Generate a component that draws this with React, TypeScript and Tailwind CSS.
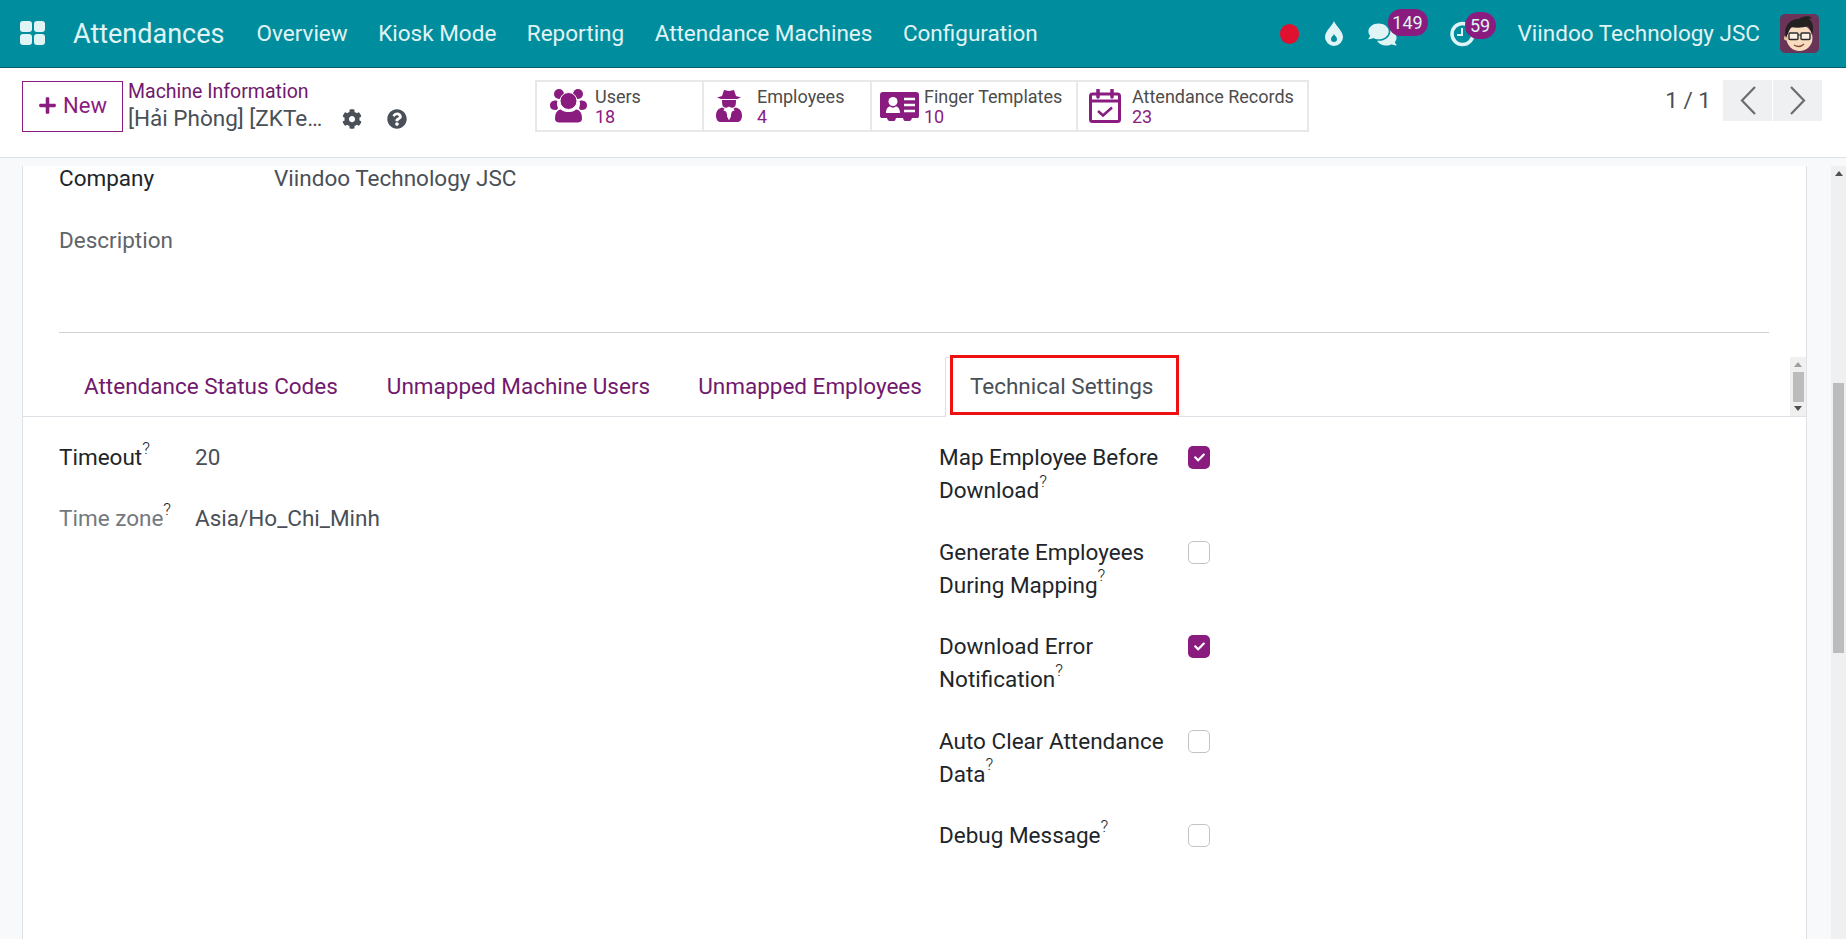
import { FaCheck, FaCog, FaComments, FaQuestionCircle, FaPlus } from 'react-icons/fa';
import type { ReactNode } from 'react';

const NAV_ITEMS = ['Overview', 'Kiosk Mode', 'Reporting', 'Attendance Machines', 'Configuration'];

function AppsIcon() {
  return (
    <div className="grid w-[25px] grid-cols-2 gap-[2px]">
      <span className="h-[11px] rounded-[3px] bg-[#e0f3f5]" />
      <span className="h-[11px] rounded-[3px] bg-[#e0f3f5]" />
      <span className="h-[11px] rounded-[3px] bg-[#e0f3f5]" />
      <span className="h-[11px] rounded-[3px] bg-[#e0f3f5]" />
    </div>
  );
}

function Avatar() {
  return (
    <svg width="39" height="39" viewBox="0 0 39 39" className="shrink-0 rounded-[5px]">
      <rect width="39" height="39" fill="#6a3458" />
      <ellipse cx="19.500" cy="24" rx="13" ry="13" fill="#f8dcc0" />
      <circle cx="6.500" cy="24" r="2.500" fill="#eec7a4" />
      <path d="M6 24C3 13 9 5 19 5c3-3 11-4 13-1-2 0-3 1-3 1 4 3 5 9 3 16-1-4-2-7-4-9-5 2-12 2-17 1-2 3-3 7-5 11z" fill="#24201f" />
      <rect x="9" y="19" width="9" height="6.500" rx="1" fill="#fff" fillOpacity=".55" stroke="#2b2b2b" strokeWidth="1.400" />
      <rect x="21" y="19" width="9" height="6.500" rx="1" fill="#fff" fillOpacity=".55" stroke="#2b2b2b" strokeWidth="1.400" />
      <path d="M18 21h3" stroke="#2b2b2b" strokeWidth="1.200" />
      <path d="M14 31c3 2 7 2 10-1" stroke="#8a4a38" strokeWidth="1.400" fill="none" />
    </svg>
  );
}

function UsersIcon() {
  return (
    <svg width="37" height="34" viewBox="0 0 37 34" className="mr-[8px] shrink-0" fill="#8a1c80">
      <circle cx="9" cy="5" r="5" />
      <circle cx="28" cy="5" r="5" />
      <path d="M6 11.500c-3 0-6 1-6 5 0 3 2 4.500 6 4.500 1 0 1.500-1 2-2-1-2-1.500-5-.5-7z" />
      <path d="M31 11.500c3 0 6 1 6 5 0 3-2 4.500-6 4.500-1 0-1.500-1-2-2 1-2 1.500-5 .5-7z" />
      <circle cx="18.500" cy="12" r="8.500" stroke="#fff" strokeWidth="1" />
      <path d="M9.500 33.500c-2 0-4.500-1-4.500-3.500 0-6 2-9 6-9.500 2 2 4.500 2.500 7.500 2.500s5.500-.5 7.500-2.500c4 .5 6 3.500 6 9.500 0 2.500-2.500 3.500-4.500 3.500z" />
    </svg>
  );
}

function SpyIcon() {
  return (
    <svg width="26" height="32" viewBox="0 0 26 32" className="mr-[15px] shrink-0" fill="#8a1c80">
      <path d="M8 0c2 0 3 1 5 1s3-1 5-1l2 6 5 1.500-4 1.500H5L1 7.500 6 6z" />
      <path d="M6 10h14c0 1.500 0 5-1 6.500-2 1.500-4 1.500-5 .5-.5-.5-1-.5-2 0-1 1-3 1-5-.5C6 15 6 11.500 6 10z" />
      <path d="M6 17.500l2.500 1-1 2L10 21.500 13 30l3-8.500 2.500-1-1-2 2.500-1c3 1 6 2.500 6 8.500 0 3-2 6-4 6H4c-2 0-4-3-4-6 0-6 3-7.500 6-8.500z" />
      <path d="M10 20.500l3 1.500 3-1.500-2 2 1 4-2 3.500-2-3.500 1-4z" fill="#fff" />
    </svg>
  );
}

function CardIcon() {
  return (
    <svg width="39" height="29" viewBox="0 0 39 29" className="mr-[5px] shrink-0">
      <path d="M3 0h33c2 0 3 1 3 3v21c0 1.500-1 2-2 2h-5c-.5 2-1.500 3-2.500 3H25c-1 0-1.500-1-2-3h-7c-.5 2-1 3-2 3H9.500C8.500 29 7.500 28 7 26H2c-1 0-2-.5-2-2V3c0-2 1-3 3-3z" fill="#8a1c80" />
      <circle cx="13" cy="9.500" r="4.500" fill="#fff" />
      <path d="M6 21c0-4 2-6.500 4-6.500 2 1.500 4 1.500 6 0 2 0 4 2.500 4 6.500z" fill="#fff" />
      <path d="M24 7h11M24 13h11M24 19h11" stroke="#fff" strokeWidth="2.500" />
    </svg>
  );
}

function CalendarIcon() {
  return (
    <svg width="32" height="34" viewBox="0 0 32 34" className="mr-[11px] shrink-0" fill="none" stroke="#8a1c80">
      <rect x="1.500" y="5" width="29" height="27.500" rx="2" strokeWidth="3" />
      <path d="M1.500 12h29" strokeWidth="3" />
      <path d="M9 1v7M23 1v7" strokeWidth="3.500" strokeLinecap="round" />
      <path d="M9 22l5 4.500 9-8" strokeWidth="2.500" />
    </svg>
  );
}

function DropIcon() {
  return (
    <svg width="18" height="25" viewBox="0 0 18 25" className="ml-[26px] shrink-0">
      <path d="M9 0c1 4 9 10 9 16a9 9 0 0 1-18 0C0 10 8 4 9 0z" fill="#e0f3f5" />
      <path d="M9 13c.5 1.500 3 3 3 5a3 3 0 0 1-6 0c0-2 2.500-3.500 3-5z" fill="#008e9e" />
    </svg>
  );
}

function ClockIcon() {
  return (
    <svg width="25" height="26" viewBox="0 0 25 26" className="shrink-0" fill="none" stroke="#e0f3f5">
      <circle cx="12.500" cy="13" r="10.500" strokeWidth="3.500" />
      <path d="M12 7v7H7" strokeWidth="2" />
    </svg>
  );
}

function PagerChevron({ d }: { d: string }) {
  return (
    <svg width="18" height="31" viewBox="0 0 18 31" fill="none" stroke="#6c6c6c" strokeWidth="2.200">
      <path d={d} />
    </svg>
  );
}

function StatButton({ icon, label, value, className }: { icon: ReactNode; label: string; value: string; className: string }) {
  return (
    <div className={`flex h-full items-center border-r-2 border-[#e6e8ea] last:border-r-0 ${className}`}>
      {icon}
      <div className="pt-[1px] leading-[20px]">
        <div className="text-[18px] whitespace-nowrap text-[#4c4c4c]">{label}</div>
        <div className="text-[18px] text-[#8a1c80]">{value}</div>
      </div>
    </div>
  );
}

function Help() {
  return <sup className="top-[-0.65em] text-[17px] font-light text-[#212529]">?</sup>;
}

function Check({ checked }: { checked?: boolean }) {
  if (checked) {
    return (
      <span className="flex h-[23px] w-[22px] shrink-0 items-center justify-center rounded-[5px] bg-[#8a1c80]">
        <FaCheck className="h-[11px] w-[11px] text-white" />
      </span>
    );
  }
  return <span className="block h-[23px] w-[22px] shrink-0 rounded-[5px] border border-[#bfc4c9] bg-white" />;
}

function BoolField({ label, checked }: { label: ReactNode; checked?: boolean }) {
  return (
    <div className="flex items-start">
      <div className="w-[249px] pr-[10px] text-[#212529]">{label}</div>
      <div className="pt-[5px]">
        <Check checked={checked} />
      </div>
    </div>
  );
}

export default function App() {
  return (
    <div className="flex h-[939px] w-[1846px] flex-col overflow-hidden bg-[#f8f9fa] font-['Roboto',sans-serif] text-[22.500px] text-[#495057]">
      <header className="flex h-[68px] shrink-0 items-center border-b border-[#00606d] bg-[#008e9e] text-[#e0f3f5]">
        <div className="ml-[20px] mb-[2px]">
          <AppsIcon />
        </div>
        <div className="ml-[28px] pt-[1px] text-[27px]">Attendances</div>
        <nav className="ml-[32px] flex gap-[30.500px]">
          {NAV_ITEMS.map((item) => (
            <span key={item} className="whitespace-nowrap">{item}</span>
          ))}
        </nav>
        <div className="ml-auto flex items-center pr-[27px]">
          <span className="h-[20px] w-[19px] rounded-full bg-[#e0112f]" />
          <DropIcon />
          <div className="relative ml-[25px] flex items-center pt-[2px]">
            <FaComments className="h-[25px] w-[29px]" />
            <span className="absolute left-[20px] top-[-11px] flex h-[27px] w-[40px] items-center justify-center rounded-[13px] bg-[#8a1c80] text-[18px]">149</span>
          </div>
          <div className="relative ml-[53px] flex items-center">
            <ClockIcon />
            <span className="absolute left-[15px] top-[-9px] flex h-[27px] w-[31px] items-center justify-center rounded-[14px] bg-[#8a1c80] text-[18px]">59</span>
          </div>
          <span className="ml-[43px] whitespace-nowrap">Viindoo Technology JSC</span>
          <div className="ml-[20px]">
            <Avatar />
          </div>
        </div>
      </header>

      <div className="flex h-[90px] shrink-0 items-start border-b border-[#dee2e6] bg-white pt-[12px]">
        <button className="ml-[22px] mt-[1px] flex h-[51px] w-[101px] items-center justify-center gap-[6px] border border-[#8a1c80] pb-[2px] text-[22px] text-[#8a1c80]">
          <FaPlus className="h-[19px] w-[19px]" />
          New
        </button>
        <div className="ml-[5px] w-[301px] pt-[1px]">
          <div className="text-[19.500px] leading-[22px] text-[#71196d]">Machine Information</div>
          <div className="mt-[2px] flex items-center leading-[27px]">
            <span className="text-[22.500px] whitespace-nowrap">[Hải Phòng] [ZKTe…</span>
            <FaCog className="ml-[20px] h-[20px] w-[20px] text-[#495057]" />
            <FaQuestionCircle className="ml-[25px] h-[20px] w-[20px] text-[#495057]" />
          </div>
        </div>
        <div className="ml-[106px] flex h-[52px] border-2 border-[#e6e8ea]">
          <StatButton className="w-[167px] pl-[13px]" label="Users" value="18" icon={<UsersIcon />} />
          <StatButton className="w-[168px] pl-[12px]" label="Employees" value="4" icon={<SpyIcon />} />
          <StatButton className="w-[206px] pl-[8px]" label="Finger Templates" value="10" icon={<CardIcon />} />
          <StatButton className="w-[229px] pl-[11px]" label="Attendance Records" value="23" icon={<CalendarIcon />} />
        </div>
        <div className="ml-auto flex items-center pr-[24px]">
          <span className="mr-[12px] text-[22.500px]">1 / 1</span>
          <div className="flex gap-[1px]">
            <span className="flex h-[41px] w-[49px] items-center justify-center bg-[#eff0f2]"><PagerChevron d="M16 2 3 15.500 16 29" /></span>
            <span className="flex h-[41px] w-[49px] items-center justify-center bg-[#eff0f2]"><PagerChevron d="M2 2l13 13.500L2 29" /></span>
          </div>
        </div>
      </div>

      <main className="flex min-h-0 flex-1">
        <section className="ml-[22px] mt-[8px] w-[1785px] border-x border-[#dee2e6] bg-white">
          <div className="px-[36px]">
            <div className="flex h-[26px] items-center">
              <span className="w-[215px] text-[#212529]">Company</span>
              <span>Viindoo Technology JSC</span>
            </div>
            <div className="mt-[35px] h-[26px] leading-[26px] text-[#5f6468]">Description</div>
            <div className="mt-[79px] mr-[1px] border-t border-[#cfd2d5]" />
          </div>
          <div className="mt-[24px] flex h-[60px] items-stretch justify-between border-b border-[#dee2e6] pl-[36px]">
            <div className="flex">
              <span className="flex items-center whitespace-nowrap px-[25px] text-[#71196d]">Attendance Status Codes</span>
              <span className="flex items-center whitespace-nowrap px-[24px] text-[#71196d]">Unmapped Machine Users</span>
              <span className="flex items-center whitespace-nowrap pl-[24px] pr-[23px] text-[#71196d]">Unmapped Employees</span>
              <span className="relative z-10 -mb-[1px] flex items-center whitespace-nowrap border-x border-t border-[#dee2e6] bg-white pl-[24px] pr-[25px] pb-[1px]">
                Technical Settings
                <span className="absolute left-[4px] top-[-3px] h-[60px] w-[229px] border-[3px] border-[#ee1111]" />
              </span>
            </div>
            <div className="flex w-[16px] flex-col items-center justify-between bg-[#f0f0f0] py-[5px]">
              <span className="h-0 w-0 border-x-[4px] border-b-[5px] border-x-transparent border-b-[#a0a0a0]" />
              <span className="h-[30px] w-[11px] bg-[#bcbcbc]" />
              <span className="h-0 w-0 border-x-[4px] border-t-[5px] border-x-transparent border-t-[#505050]" />
            </div>
          </div>
          <div className="flex pt-[24px]">
            <div className="w-[916px] pl-[36px]">
              <div className="flex h-[33px] items-center">
                <span className="w-[136px] text-[#212529]">Timeout<Help /></span>
                <span>20</span>
              </div>
              <div className="mt-[28px] flex h-[33px] items-center">
                <span className="w-[136px] text-[#74797e]">Time zone<Help /></span>
                <span>Asia/Ho_Chi_Minh</span>
              </div>
            </div>
            <div className="flex flex-col gap-[28.500px] leading-[33px]">
              <BoolField label={<>Map Employee Before Download<Help /></>} checked />
              <BoolField label={<>Generate Employees During Mapping<Help /></>} />
              <BoolField label={<>Download Error Notification<Help /></>} checked />
              <BoolField label={<>Auto Clear Attendance Data<Help /></>} />
              <BoolField label={<>Debug Message<Help /></>} />
            </div>
          </div>
        </section>
        <div className="ml-[24px] mt-[8px] flex w-[15px] flex-col items-center bg-[#f0f0f0] pt-[5px]">
          <span className="h-0 w-0 border-x-[4px] border-b-[5px] border-x-transparent border-b-[#505050]" />
          <span className="mt-[207px] h-[270px] w-[11px] bg-[#bcbcbc]" />
        </div>
      </main>
    </div>
  );
}
